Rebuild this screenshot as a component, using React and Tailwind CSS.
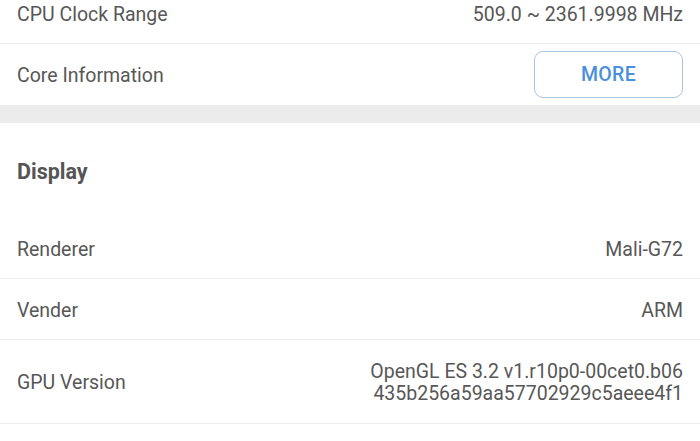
import React from 'react';

const rows = [
  { label: 'Renderer', value: 'Mali-G72' },
  { label: 'Vender', value: 'ARM' },
];

const InfoRow = ({ label, children, tall }) => (
  <div className={`flex items-center justify-between px-[17px] pt-[3px] border-b border-[#eeeeee] ${tall ? 'h-[84px]' : 'h-[61px]'}`}>
    <span>{label}</span>
    {children}
  </div>
);

export default function App() {
  return (
    <div
      className="w-[700px] h-[441px] overflow-hidden bg-white text-[#575757] text-[19.5px] leading-[22px]"
      style={{ fontFamily: 'Roboto, "Noto Sans", sans-serif' }}
    >
      <div className="-mt-[17px]">
        <InfoRow label="CPU Clock Range">
          <span>509.0 ~ 2361.9998 MHz</span>
        </InfoRow>
        <div className="flex items-center justify-between h-[61px] px-[17px]">
          <span className="pt-[3px]">Core Information</span>
          <button className="w-[149px] h-[47px] rounded-[9px] border border-[#a9c6df] text-[#4a90dc] font-medium text-[19.5px] tracking-[0.3px] pt-[1px]">
            MORE
          </button>
        </div>
      </div>

      <div className="h-[18px] bg-[#ececec]" />

      <div className="h-[95px] flex items-center px-[17px] pt-[3px]">
        <span className="font-bold text-[#555555] text-[21.5px]">Display</span>
      </div>

      {rows.map((r) => (
        <InfoRow key={r.label} label={r.label}>
          <span>{r.value}</span>
        </InfoRow>
      ))}

      <InfoRow label="GPU Version" tall>
        <div className="text-right">
          <div>OpenGL ES 3.2 v1.r10p0-00cet0.b06</div>
          <div>435b256a59aa57702929c5aeee4f1</div>
        </div>
      </InfoRow>
    </div>
  );
}
